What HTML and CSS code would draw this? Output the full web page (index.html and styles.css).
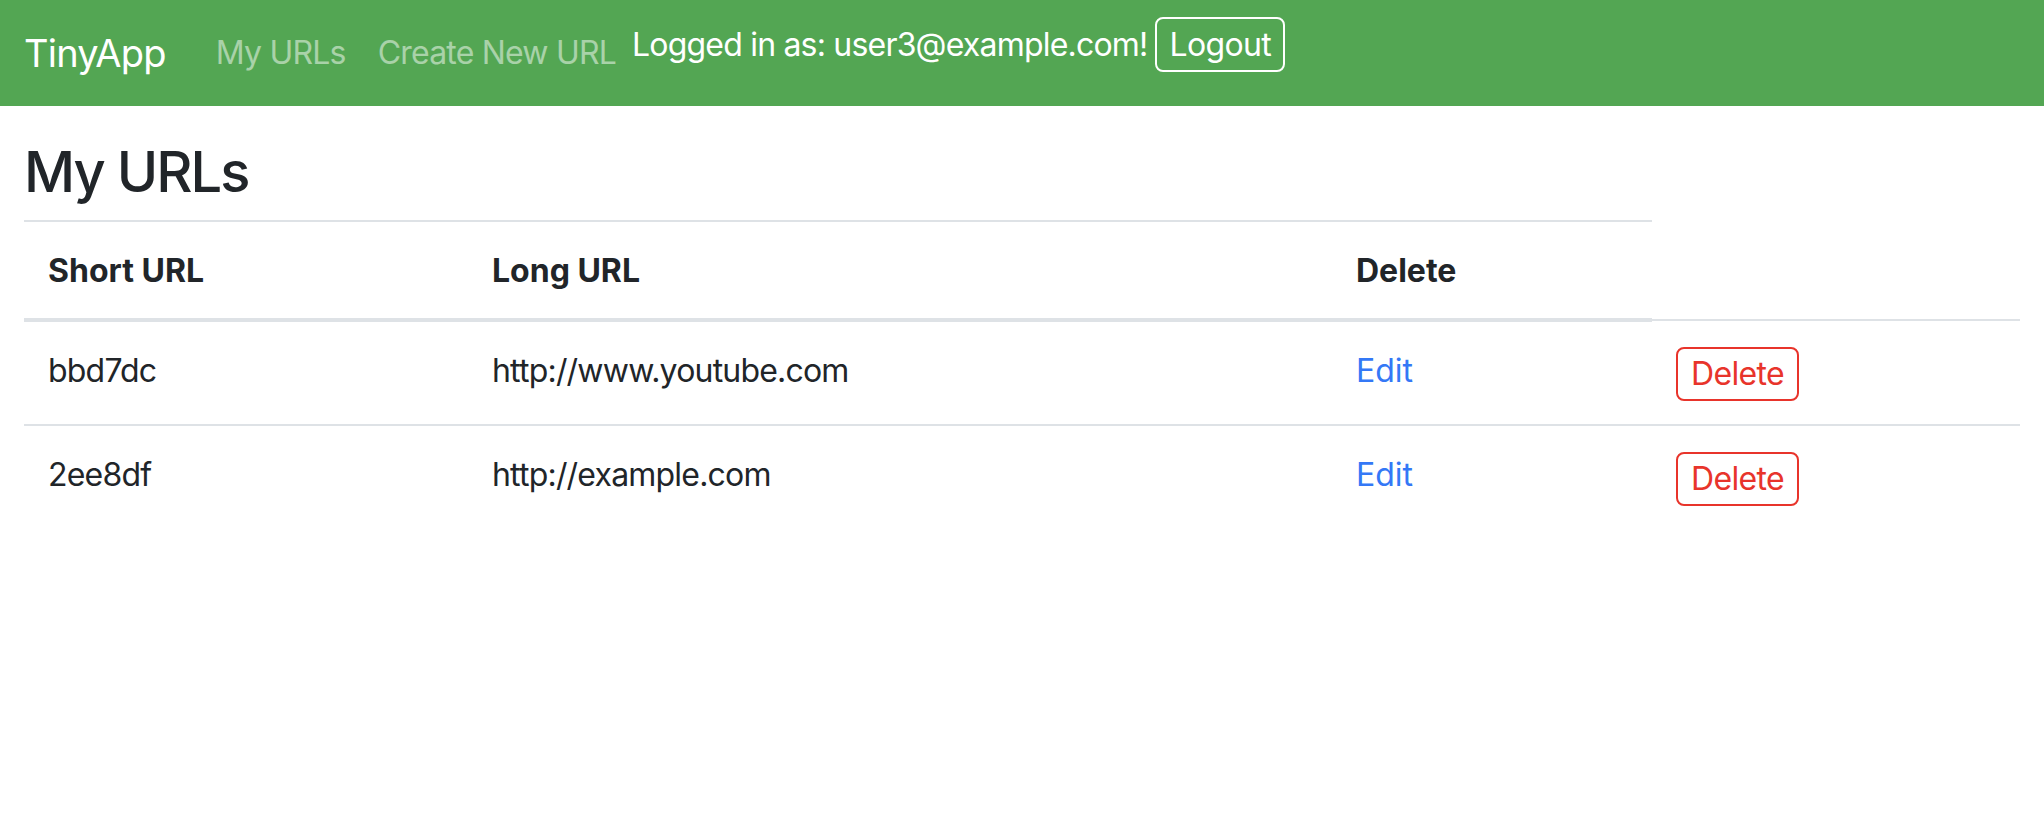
FILE: index.html
```html
<!DOCTYPE html>
<html lang="en">
<head>
<meta charset="utf-8">
<title>TinyApp</title>
<link rel="stylesheet" href="styles.css">
</head>
<body>
<nav class="navbar">
  <a class="brand" href="#">TinyApp</a>
  <a class="nav-link" href="#">My URLs</a>
  <a class="nav-link" href="#">Create New URL</a>
  <div class="user-info">
    <span class="user-text">Logged in as: user3@example.com!</span>
    <button class="logout-btn" type="button">Logout</button>
  </div>
</nav>
<main class="page">
  <h1 class="title">My URLs</h1>
  <table class="url-table">
    <colgroup>
      <col class="c1"><col class="c2"><col class="c3"><col class="c4">
    </colgroup>
    <thead>
      <tr>
        <th>Short URL</th>
        <th>Long URL</th>
        <th>Delete</th>
      </tr>
    </thead>
    <tbody>
      <tr>
        <td>bbd7dc</td>
        <td>http://www.youtube.com</td>
        <td><a class="edit-link" href="#">Edit</a></td>
        <td><form class="del-form"><button class="del-btn" type="button">Delete</button></form></td>
      </tr>
      <tr>
        <td>2ee8df</td>
        <td>http://example.com</td>
        <td><a class="edit-link" href="#">Edit</a></td>
        <td><form class="del-form"><button class="del-btn" type="button">Delete</button></form></td>
      </tr>
    </tbody>
  </table>
</main>
</body>
</html>
```

FILE: styles.css
```css
* { box-sizing: border-box; }

body {
  margin: 0;
  font-family: Inter, "Liberation Sans", sans-serif;
  font-size: 32px;
  line-height: 1.5;
  letter-spacing: -0.025em;
  color: #212529;
  background: #ffffff;
}

.navbar {
  display: flex;
  align-items: center;
  height: 106px;
  padding: 0 24px;
  background: #53a653;
}

.brand {
  font-size: 38px;
  line-height: 1;
  letter-spacing: -0.02em;
  color: #ffffff;
  text-decoration: none;
  margin-right: 34px;
}

.nav-link {
  font-size: 32px;
  line-height: 1;
  padding: 0 16px;
  color: rgba(255, 255, 255, 0.5);
  text-decoration: none;
}

.user-info {
  display: flex;
  align-items: center;
  gap: 8px;
  margin-bottom: 17px;
  color: #ffffff;
}

.user-text {
  font-size: 32px;
  line-height: 1;
}

.logout-btn {
  font-family: inherit;
  font-size: 32px;
  line-height: 1;
  letter-spacing: -0.02em;
  height: 55px;
  padding: 0 12px;
  color: #ffffff;
  background: transparent;
  border: 2px solid #ffffff;
  border-radius: 8px;
}

.page {
  padding: 33px 24px 0;
}

.title {
  font-size: 56px;
  font-weight: 500;
  line-height: 1.2;
  letter-spacing: -0.035em;
  margin: 0 0 14px;
}

.url-table {
  width: 100%;
  border-collapse: collapse;
  table-layout: fixed;
}

.c1 { width: 444px; }
.c2 { width: 864px; }
.c3 { width: 320px; }

.url-table th,
.url-table td {
  padding: 25px 24px 23px;
  text-align: left;
  vertical-align: top;
  border-top: 2px solid #dee2e6;
}

.url-table th {
  font-weight: 700;
  letter-spacing: 0;
}

.url-table thead th {
  border-bottom: 4px solid #dee2e6;
}

.edit-link {
  color: #3478f6;
  text-decoration: none;
  letter-spacing: 0;
}

.del-form {
  margin: 0;
  height: 54px;
}

.del-btn {
  display: block;
  margin-top: 1px;
  font-family: inherit;
  font-size: 32px;
  line-height: 1;
  letter-spacing: -0.02em;
  height: 54px;
  padding: 0 13px;
  color: #e8342b;
  background: #ffffff;
  border: 2px solid #e8342b;
  border-radius: 8px;
}
```
